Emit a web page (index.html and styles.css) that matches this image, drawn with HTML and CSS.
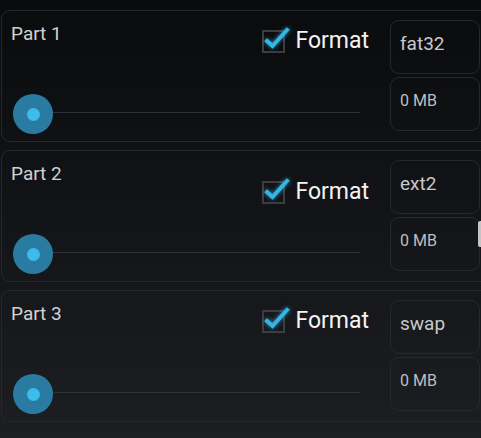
FILE: index.html
```html
<!DOCTYPE html>
<html>
<head>
<meta charset="utf-8">
<link rel="stylesheet" href="styles.css">
</head>
<body>
<div class="list">
  <div class="card">
    <div class="main">
      <div class="title">Part 1</div>
      <label class="check">
        <span class="box"><svg class="tick" viewBox="0 0 28 24" width="28" height="24"><path d="M5 14 L10.5 19 L25 3" /></svg></span>
        <span class="check-label">Format</span>
      </label>
      <div class="slider"><span class="thumb"><span class="dot"></span></span></div>
    </div>
    <div class="fields">
      <div class="field field--fs">fat32</div>
      <div class="field field--size">0 MB</div>
    </div>
  </div>
  <div class="card">
    <div class="main">
      <div class="title">Part 2</div>
      <label class="check check--low">
        <span class="box"><svg class="tick" viewBox="0 0 28 24" width="28" height="24"><path d="M5 14 L10.5 19 L25 3" /></svg></span>
        <span class="check-label">Format</span>
      </label>
      <div class="slider"><span class="thumb"><span class="dot"></span></span></div>
    </div>
    <div class="fields">
      <div class="field field--fs">ext2</div>
      <div class="field field--size">0 MB</div>
    </div>
  </div>
  <div class="card">
    <div class="main">
      <div class="title">Part 3</div>
      <label class="check">
        <span class="box"><svg class="tick" viewBox="0 0 28 24" width="28" height="24"><path d="M5 14 L10.5 19 L25 3" /></svg></span>
        <span class="check-label">Format</span>
      </label>
      <div class="slider"><span class="thumb"><span class="dot"></span></span></div>
    </div>
    <div class="fields">
      <div class="field field--fs">swap</div>
      <div class="field field--size">0 MB</div>
    </div>
  </div>
</div>
<div class="scroll-indicator"></div>
</body>
</html>
```

FILE: styles.css
```css
html, body {
  margin: 0;
  padding: 0;
}
body {
  width: 481px;
  height: 438px;
  overflow: hidden;
  background: linear-gradient(180deg, #0a0b0d 0%, #131417 50%, #1c1e22 100%);
  font-family: Roboto, "Noto Sans", sans-serif;
  position: relative;
}
.list {
  display: flex;
  flex-direction: column;
  gap: 8px;
  padding: 10px 0 0 1px;
}
.card {
  box-sizing: border-box;
  width: 480px;
  height: 132px;
  border: 1px solid #25272a;
  border-right: none;
  border-radius: 9px 0 0 9px;
  display: flex;
}
.main {
  width: 388px;
  flex: none;
  display: grid;
  grid-template-columns: 1fr auto;
  grid-template-rows: auto 1fr auto;
}
.title {
  grid-column: 1;
  grid-row: 1;
  margin: 12px 0 0 9px;
  font-size: 19px;
  line-height: 22px;
  color: #d2d2d2;
}
.check {
  grid-column: 2;
  grid-row: 1 / 3;
  align-self: start;
  display: flex;
  align-items: center;
  margin: 16px 21px 0 0;
  gap: 10px;
}
.check--low {
  margin-top: 27px;
}
.box {
  position: relative;
  box-sizing: border-box;
  width: 23px;
  height: 23px;
  border: 2px solid #3b3d40;
}
.tick {
  position: absolute;
  left: -2px;
  top: -5px;
  overflow: visible;
  filter: drop-shadow(0 0 2px rgba(51, 181, 229, 0.8));
}
.tick path {
  fill: none;
  stroke: #33b5e5;
  stroke-width: 4;
  stroke-linecap: square;
  stroke-linejoin: miter;
}
.check-label {
  font-size: 23px;
  line-height: 28px;
  color: #f4f4f4;
}
.slider {
  grid-column: 1 / 3;
  grid-row: 3;
  position: relative;
  width: 347px;
  height: 40px;
  margin: 0 0 7px 11px;
  display: flex;
}
.slider::before {
  content: "";
  position: absolute;
  left: 20px;
  right: 0;
  top: 18px;
  height: 1px;
  background: #2f3235;
}
.thumb {
  position: relative;
  width: 40px;
  height: 40px;
  border-radius: 50%;
  background: #2a7ba1;
  display: flex;
  align-items: center;
  justify-content: center;
}
.dot {
  width: 13px;
  height: 13px;
  border-radius: 50%;
  background: #3bbcec;
}
.fields {
  width: 90px;
  flex: none;
  display: flex;
  flex-direction: column;
  gap: 3px;
  padding-top: 9px;
}
.field {
  box-sizing: border-box;
  height: 54px;
  border: 1px solid #26282b;
  border-radius: 9px;
  padding-left: 9px;
  color: #c9c9c9;
}
.field--fs {
  font-size: 19px;
  line-height: 22px;
  padding-top: 12px;
}
.field--size {
  font-size: 16px;
  line-height: 20px;
  padding-top: 13px;
  color: #bebebe;
}
.scroll-indicator {
  position: absolute;
  left: 478px;
  top: 221px;
  width: 3px;
  height: 26px;
  border-radius: 2px 0 0 2px;
  background: #c4c4c4;
}
```
